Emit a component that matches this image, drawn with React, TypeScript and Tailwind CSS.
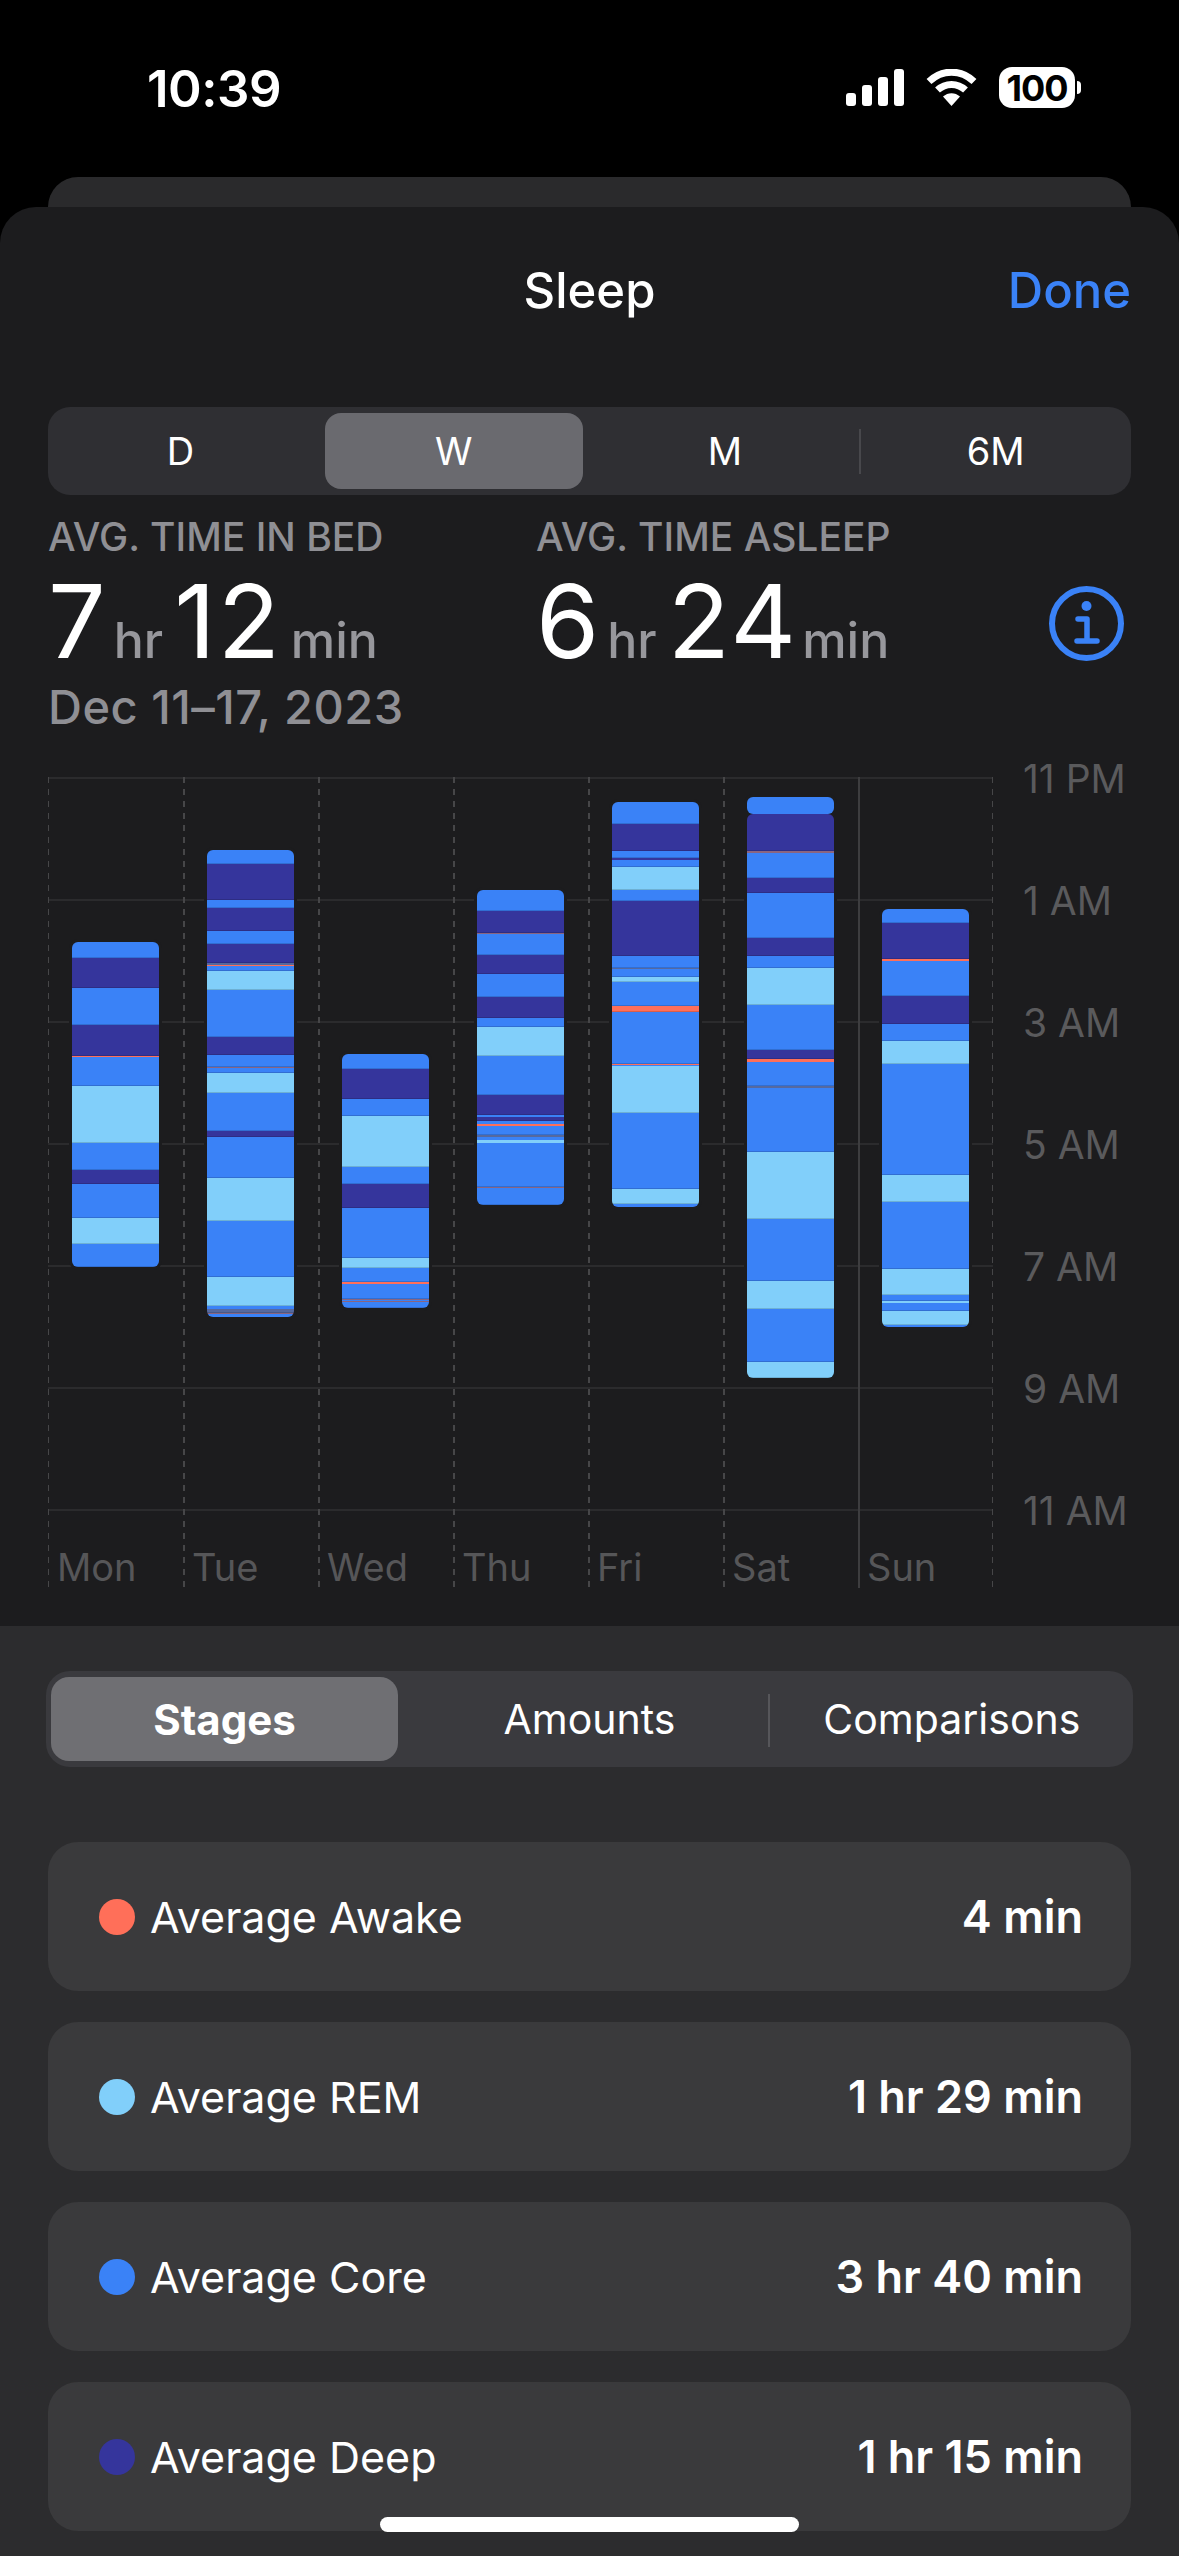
import React from 'react';

type Stage = 'c' | 'd' | 'r' | 'a' | 'g' | 'm';

const stageColor: Record<Stage, string> = {
  c: 'bg-[#3a82f7]',
  d: 'bg-[#35359c]',
  r: 'bg-[#81cffa]',
  a: 'bg-[#ff6f59]',
  g: 'bg-[#56699f]',
  m: 'bg-[#8a6580]',
};

// Each stage runs down to the y given next to it, measured on the page
const days: { label: string; top: number; split?: number; stages: [Stage, number][] }[] = [
  {
    label: 'Mon',
    top: 942,
    stages: [['c', 958], ['d', 988], ['c', 1025], ['d', 1056], ['a', 1057], ['c', 1086], ['r', 1143], ['c', 1170], ['d', 1184], ['c', 1218], ['r', 1244], ['c', 1267]],
  },
  {
    label: 'Tue',
    top: 850,
    stages: [['c', 864], ['d', 900], ['c', 908], ['d', 931], ['c', 944], ['d', 963], ['g', 965], ['a', 966], ['c', 971], ['r', 990], ['c', 1037], ['d', 1055], ['c', 1067], ['m', 1068], ['c', 1073], ['r', 1093], ['c', 1131], ['d', 1137], ['c', 1178], ['r', 1221], ['c', 1277], ['r', 1306], ['c', 1309], ['g', 1313], ['m', 1314], ['c', 1317]],
  },
  {
    label: 'Wed',
    top: 1054,
    stages: [['c', 1069], ['d', 1099], ['c', 1116], ['r', 1167], ['c', 1184], ['d', 1208], ['c', 1258], ['r', 1268], ['c', 1282], ['a', 1284], ['c', 1299], ['m', 1300], ['c', 1301], ['m', 1302], ['c', 1308]],
  },
  {
    label: 'Thu',
    top: 890,
    stages: [['c', 911], ['d', 933], ['m', 934], ['c', 955], ['d', 974], ['c', 997], ['d', 1018], ['c', 1027], ['r', 1056], ['c', 1095], ['d', 1115], ['c', 1117], ['d', 1121], ['c', 1124], ['a', 1126], ['c', 1135], ['g', 1137], ['c', 1140], ['r', 1143], ['c', 1187], ['m', 1188], ['c', 1205]],
  },
  {
    label: 'Fri',
    top: 802,
    stages: [['c', 824], ['d', 851], ['c', 858], ['d', 860], ['c', 867], ['r', 890], ['c', 901], ['d', 956], ['c', 968], ['g', 969], ['c', 977], ['r', 982], ['c', 1006], ['a', 1012], ['c', 1064], ['a', 1065], ['c', 1066], ['r', 1113], ['c', 1189], ['r', 1204], ['c', 1207]],
  },
  {
    label: 'Sat',
    top: 797,
    split: 0,
    stages: [['c', 814], ['d', 851], ['m', 853], ['c', 878], ['d', 893], ['c', 938], ['d', 956], ['c', 968], ['r', 1005], ['c', 1050], ['d', 1059], ['a', 1062], ['c', 1086], ['g', 1088], ['c', 1152], ['r', 1219], ['c', 1281], ['r', 1309], ['c', 1362], ['r', 1378]],
  },
  {
    label: 'Sun',
    top: 909,
    stages: [['c', 923], ['d', 959], ['a', 961], ['c', 996], ['d', 1024], ['c', 1041], ['r', 1064], ['c', 1175], ['r', 1202], ['c', 1269], ['r', 1295], ['c', 1301], ['r', 1303], ['c', 1311], ['r', 1325], ['c', 1327]],
  },
];

const hours = ['11 PM', '1 AM', '3 AM', '5 AM', '7 AM', '9 AM', '11 AM'];

const averages = [
  { label: 'Average Awake', value: '4 min', dot: 'bg-[#ff6f59]' },
  { label: 'Average REM', value: '1 hr 29 min', dot: 'bg-[#81cffa]' },
  { label: 'Average Core', value: '3 hr 40 min', dot: 'bg-[#3a82f7]' },
  { label: 'Average Deep', value: '1 hr 15 min', dot: 'bg-[#35359c]' },
];

const dashed =
  'bg-[repeating-linear-gradient(to_bottom,#464648_0,#464648_6px,transparent_6px,transparent_12px)]';

const StatusIcons = () => (
  <div className="flex items-center">
    <svg width="58" height="37" viewBox="0 0 58 37" fill="#fff">
      <rect x="0" y="24" width="10" height="13" rx="3" />
      <rect x="16" y="16" width="10" height="21" rx="3" />
      <rect x="32" y="8" width="10" height="29" rx="3" />
      <rect x="48" y="0" width="10" height="37" rx="3" />
    </svg>
    <svg className="ml-[22px]" width="51" height="37" viewBox="0 0 51 37" fill="none" stroke="#fff" strokeWidth="7">
      <path d="M3 12.5 C16 0 35 0 48 12.5" />
      <path d="M11.5 21 C19.5 13.5 31.5 13.5 39.5 21" />
      <path d="M17 27.5 C22 23 29 23 34 27.5 L25.5 37 Z" fill="#fff" stroke="none" />
    </svg>
    <div className="ml-[22px] flex h-[41px] w-[76px] items-center justify-center rounded-[13px] bg-white text-[36px] font-bold leading-none tracking-[-1px] text-black">
      100
    </div>
    <div className="ml-[2px] h-[13px] w-[4px] rounded-r-full bg-white" />
  </div>
);

const Stat = ({ label, hr, min, width, minGap }: { label: string; hr: string; min: string; width: string; minGap: string }) => (
  <div className={width}>
    <div className="text-[39px] font-medium leading-[44px] text-[#8f8f94]">{label}</div>
    <div className="mt-[12px] flex h-[100px] items-baseline">
      <span className="text-[102px] leading-[100px] tracking-[-2px] text-white">{hr}</span>
      <span className="ml-[10px] text-[50px] font-medium leading-none text-[#97979c]">hr</span>
      <span className="ml-[11px] text-[102px] leading-[100px] tracking-[2px] text-white">{min}</span>
      <span className={`${minGap} text-[50px] font-medium leading-none text-[#97979c]`}>min</span>
    </div>
  </div>
);

const Bar = ({ top, split, stages }: { top: number; split?: number; stages: [Stage, number][] }) => {
  let y = top;
  return (
    <div
      className="mx-[24px] w-[87px] overflow-hidden rounded-[6px] ring-[3px] ring-[#1c1c1e]"
      style={{ marginTop: top - 777 }}
    >
      {stages.map(([stage, end], i) => {
        const height = end - y;
        y = end;
        const notch = i === split ? 'rounded-b-[6px]' : split !== undefined && i === split + 1 ? 'rounded-t-[6px]' : '';
        const seam = height > 3 && i !== split ? 'border-b border-black/15' : '';
        return <div key={i} className={`${stageColor[stage]} ${notch} ${seam}`} style={{ height }} />;
      })}
    </div>
  );
};

const Chart = () => (
  <div className="mt-[43px] flex">
    <div className="relative ml-[48px] h-[811px] w-[945px]">
      {/* Grid behind the bars */}
      {[0, 122, 244, 366, 488, 610, 732].map((t) => (
        <div key={t} className="absolute left-0 right-0 h-[2px] bg-[#2b2b2d]" style={{ top: t }} />
      ))}
      {[135, 270, 405, 540, 675].map((l) => (
        <div key={l} className={`absolute bottom-0 top-0 w-[2px] ${dashed}`} style={{ left: l }} />
      ))}
      <div className={`absolute bottom-0 left-0 top-0 w-px ${dashed}`} />
      <div className={`absolute bottom-0 right-0 top-0 w-px ${dashed}`} />
      <div className="absolute bottom-0 left-[810px] top-0 w-[2px] bg-[#3d3d3f]" />

      <div className="relative grid h-full grid-cols-7">
        {days.map((day) => (
          <div key={day.label} className="flex flex-col">
            <Bar top={day.top} split={day.split} stages={day.stages} />
            <div className="mt-auto -mb-[4px] pl-[9px] text-[38px] leading-[50px] text-[#565658]">{day.label}</div>
          </div>
        ))}
      </div>
    </div>
    <div className="ml-[30px] -mt-[59px] flex flex-col">
      {hours.map((h) => (
        <div key={h} className="flex h-[122px] items-center text-[39px] text-[#5a5a5c]">
          {h}
        </div>
      ))}
    </div>
  </div>
);

export default function App() {
  return (
    <div className="relative h-[2556px] w-[1179px] overflow-hidden bg-black font-['Inter',sans-serif] text-white">
      {/* Status bar */}
      <div className="flex h-[177px] items-start justify-between pl-[147px] pr-[98px] pt-[67px]">
        <div className="text-[51px] font-semibold leading-[44px] tracking-[-0.5px]">10:39</div>
        <StatusIcons />
      </div>

      <div className="mx-[48px] h-[30px] rounded-t-[30px] bg-[#2a2a2c]" />

      {/* Sleep sheet */}
      <div className="h-[1419px] rounded-t-[36px] bg-[#1c1c1e]">
        <div className="relative flex h-[168px] items-center justify-center">
          <div className="text-[49px] font-medium text-white">Sleep</div>
          <div className="absolute right-[48px] text-[49px] font-medium text-[#3a82f7]">Done</div>
        </div>

        <div className="mx-[48px] mt-[32px] grid h-[88px] grid-cols-4 rounded-[22px] bg-[#2f2f33] text-[38px]">
          <div className="flex items-center justify-center pr-[6px]">D</div>
          <div className="m-[6px] mr-[7px] flex items-center justify-center rounded-[16px] bg-[#6a6a6f]">W</div>
          <div className="flex items-center justify-center">M</div>
          <div className="relative flex items-center justify-center">
            <div className="absolute -left-[1px] h-[45px] w-[2px] bg-[#48484c]" />
            6M
          </div>
        </div>

        <div className="mt-[20px] flex pl-[48px] pr-[55px]">
          <Stat label="AVG. TIME IN BED" hr="7" min="12" width="w-[488px]" minGap="ml-[9px]" />
          <Stat label="AVG. TIME ASLEEP" hr="6" min="24" width="w-[513px]" minGap="ml-[4px]" />
          <svg className="mt-[71px]" width="75" height="75" viewBox="0 0 75 75" fill="none" stroke="#3a82f7">
            <circle cx="37.5" cy="37.5" r="34.5" strokeWidth="6" />
            <circle cx="37.5" cy="20" r="5" fill="#3a82f7" stroke="none" />
            <path d="M29 33 H38 V55 M28 55 H48" strokeWidth="5.5" strokeLinecap="round" strokeLinejoin="round" />
          </svg>
        </div>

        <div className="mt-[9px] pl-[48px] text-[47px] font-medium leading-[54px] tracking-[0.5px] text-[#8f8f94]">Dec 11–17, 2023</div>

        <Chart />
      </div>

      {/* Stage breakdown */}
      <div className="h-[930px] bg-[#2c2c2e] pt-[45px]">
        <div className="mx-[46px] grid h-[96px] grid-cols-3 rounded-[24px] bg-[#3a3a3e] text-[41px]">
          <div className="my-[6px] ml-[5px] flex w-[347px] items-center justify-center rounded-[18px] bg-[#6f6f73] text-[42px] font-bold">
            Stages
          </div>
          <div className="flex items-center justify-center pt-[2px]">Amounts</div>
          <div className="relative flex items-center justify-center pt-[2px]">
            <div className="absolute -left-[3px] h-[53px] w-[2px] bg-[#56565a]" />
            Comparisons
          </div>
        </div>

        <div className="mx-[48px] mt-[75px] flex flex-col gap-[31px]">
          {averages.map((row) => (
            <div key={row.label} className="flex h-[149px] items-center justify-between rounded-[30px] bg-[#3a3a3c] pl-[51px] pr-[48px]">
              <div className="flex items-center">
                <div className={`h-[36px] w-[36px] rounded-full ${row.dot}`} />
                <div className="ml-[15px] pt-[2px] text-[43px]">{row.label}</div>
              </div>
              <div className="text-[45px] font-semibold">{row.value}</div>
            </div>
          ))}
        </div>
      </div>

      {/* Home indicator */}
      <div className="absolute bottom-[24px] left-[380px] h-[15px] w-[419px] rounded-full bg-white" />
    </div>
  );
}
